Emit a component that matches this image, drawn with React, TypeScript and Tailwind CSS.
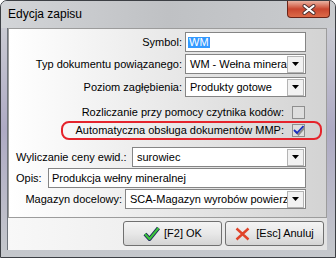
import React from 'react';

const Arrow = () => (
  <span className="mr-[1px] flex h-[17px] w-[17px] shrink-0 items-center justify-center border border-[#b4b4b4] bg-[#f2f2f2]">
    <svg width="7" height="4" viewBox="0 0 7 4">
      <path d="M0 0h7L3.5 4z" fill="#000" />
    </svg>
  </span>
);

const Combo = ({ value, className }: { value: string; className: string }) => (
  <div className={`flex h-[20px] items-center border border-[#858585] bg-white ${className}`}>
    <span className="flex-1 overflow-hidden whitespace-nowrap pl-[4px] leading-[18px]">{value}</span>
    <Arrow />
  </div>
);

const CheckBox = ({ checked }: { checked?: boolean }) => (
  <div className="relative ml-[8px] h-[13px] w-[13px] shrink-0 border border-[#8e8e8e] bg-[#dedede]">
    {checked && (
      <svg className="absolute left-[0px] top-[0px]" width="12" height="11" viewBox="0 0 12 11">
        <path d="M2.5 6.5 L5.5 9.5 L11.5 2.5" stroke="#8c8c8c" strokeWidth="2" fill="none" />
        <path d="M1 5 L4 8 L10.5 1" stroke="#1c2fc0" strokeWidth="1.8" fill="none" />
      </svg>
    )}
  </div>
);

export default function App() {
  return (
    <div className="relative flex h-[258px] w-[336px] flex-col overflow-hidden rounded-t-[7px] border border-[#3c3f44] bg-gradient-to-b from-[#d2d4d7] via-[#aeaac4] to-[#c5c8cc] font-['Liberation_Sans',Arial,sans-serif] text-[11px] text-black">
      {/* Title bar */}
      <div className="flex h-[27px] shrink-0 items-start justify-between bg-gradient-to-r from-[#d3d5d8] via-[#bfc1c4] to-[#c9cbce]">
        <span className="ml-[7px] mt-[6px] text-[12px] leading-[14px]">Edycja zapisu</span>
        <div className="mr-[5px] flex h-[17px] w-[43px] items-center justify-center rounded-b-[4px] border border-t-0 border-[#6a2418] bg-gradient-to-b from-[#e9b2a2] via-[#c9462f] to-[#dc6a48]">
          <svg width="14" height="11" viewBox="0 0 14 11">
            <path d="M2.5 2 L11.5 9 M11.5 2 L2.5 9" stroke="#4a3030" strokeWidth="4" strokeLinecap="round" />
            <path d="M2.5 2 L11.5 9 M11.5 2 L2.5 9" stroke="#ffffff" strokeWidth="2.2" strokeLinecap="round" />
          </svg>
        </div>
      </div>

      {/* Client area */}
      <div className="mb-[7px] ml-[6px] mr-[8px] flex flex-1 flex-col border-l border-[#6d737b] bg-gradient-to-r from-[#f8f8f8] to-[#e2e2e2]">
        {/* Panel */}
        <div className="flex h-[190px] flex-col border border-[#9c9c9c] bg-gradient-to-r from-white to-[#d3d3d3]">
          <div className="mt-[3px] flex h-[20px] items-center">
            <span className="w-[173px] text-right">Symbol:</span>
            <div className="ml-[3px] flex h-[20px] w-[121px] items-center border border-[#858585] bg-white pl-[2px]">
              <span className="bg-[#3399ff] px-[1px] leading-[11px] text-white">WM</span>
            </div>
          </div>
          <div className="mt-[2px] flex h-[20px] items-center">
            <span className="w-[173px] text-right">Typ dokumentu powiązanego:</span>
            <Combo value="WM - Wełna mineralna" className="ml-[3px] w-[121px]" />
          </div>
          <div className="mt-[3px] flex h-[20px] items-center">
            <span className="w-[173px] text-right">Poziom zagłębienia:</span>
            <Combo value="Produkty gotowe" className="ml-[3px] w-[121px]" />
          </div>
          <div className="mt-[6px] flex h-[18px] items-center">
            <span className="w-[275px] text-right">Rozliczanie przy pomocy czytnika kodów:</span>
            <CheckBox />
          </div>
          <div className="relative flex h-[18px] items-center">
            <span className="w-[275px] text-right">Automatyczna obsługa dokumentów MMP:</span>
            <CheckBox checked />
            <div className="absolute left-[52px] top-[0px] h-[19px] w-[261px] rounded-[8px] border-2 border-[#e5242c]" />
          </div>
          <div className="mt-[8px] flex h-[20px] items-center pl-[7px]">
            <span className="w-[116px]">Wyliczanie ceny ewid.:</span>
            <Combo value="surowiec" className="w-[174px]" />
          </div>
          <div className="mt-[1px] flex h-[20px] items-center pl-[7px]">
            <span className="w-[32px]">Opis:</span>
            <div className="flex h-[20px] w-[258px] items-center border border-[#858585] bg-white pl-[3px]">
              <span className="whitespace-nowrap">Produkcja wełny mineralnej</span>
            </div>
          </div>
          <div className="mt-[1px] flex h-[20px] items-center">
            <span className="w-[113px] text-right">Magazyn docelowy:</span>
            <Combo value="SCA-Magazyn wyrobów powierzchniowych" className="ml-[3px] w-[181px]" />
          </div>
        </div>

        {/* Buttons */}
        <div className="flex justify-end gap-[3px] pr-[3px] pt-[3px]">
          <button className="flex h-[25px] w-[99px] items-center justify-center gap-[4px] rounded-[3px] border border-[#707070] bg-gradient-to-b from-[#f4f4f4] via-[#e8e8e8] to-[#d4d4d4]">
            <svg width="17" height="15" viewBox="0 0 17 15">
              <path d="M2 8 L6.5 13 L15.5 2" stroke="#1e2c5c" strokeWidth="4" fill="none" strokeLinejoin="round" />
              <path d="M2 8 L6.5 13 L15.5 2" stroke="#3cc43c" strokeWidth="2" fill="none" strokeLinejoin="round" />
            </svg>
            <span>[F2] OK</span>
          </button>
          <button className="flex h-[25px] w-[99px] items-center justify-center gap-[6px] rounded-[3px] border border-[#707070] bg-gradient-to-b from-[#f4f4f4] via-[#e8e8e8] to-[#d4d4d4]">
            <svg width="15" height="14" viewBox="0 0 15 14">
              <path d="M1.5 1.5 L13.5 12.5 M13.5 1.5 L1.5 12.5" stroke="#e0442a" strokeWidth="2.4" />
            </svg>
            <span>[Esc] Anuluj</span>
          </button>
        </div>
      </div>
    </div>
  );
}
